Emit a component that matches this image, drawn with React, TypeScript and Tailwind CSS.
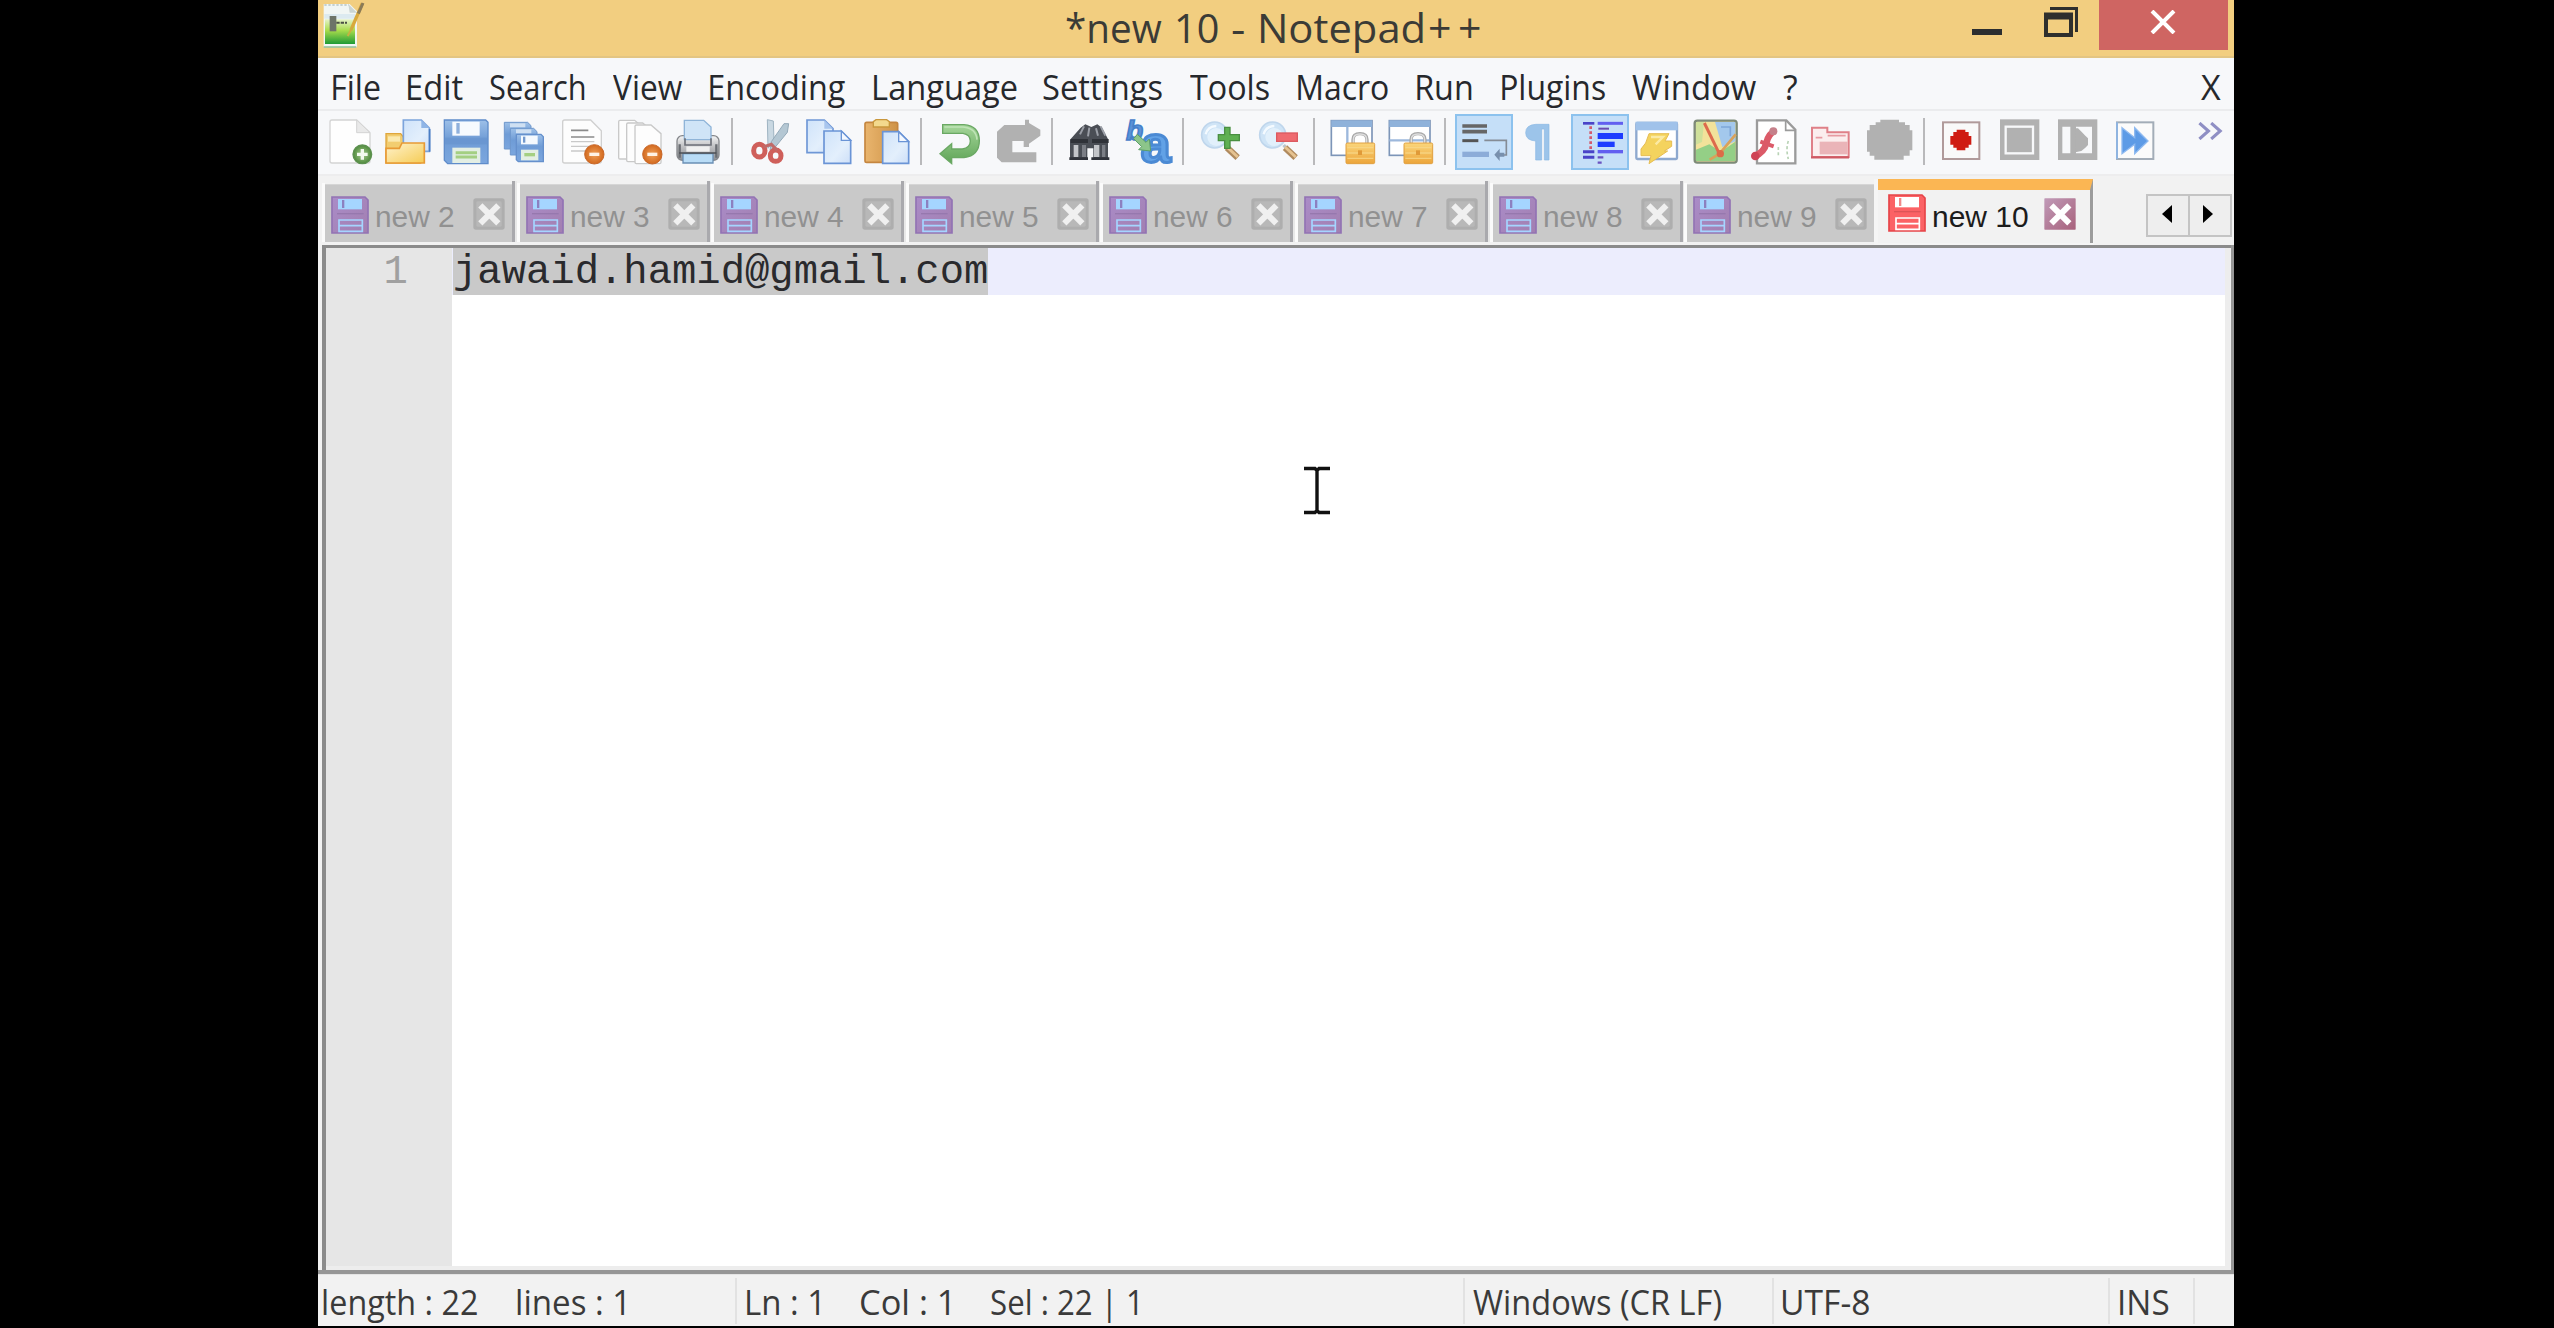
import React, { useLayoutEffect, useRef } from "react";

/** One line of text whose drawn ink fills exactly the width of its box. */
function Ink({ children, className = "" }: { children: string; className?: string }) {
  const box = useRef<HTMLDivElement>(null);
  const text = useRef<HTMLSpanElement>(null);
  useLayoutEffect(() => {
    if (!box.current || !text.current) return;
    const cs = getComputedStyle(text.current);
    const ctx = document.createElement("canvas").getContext("2d");
    if (!ctx) return;
    ctx.font = `${cs.fontWeight} ${cs.fontSize} ${cs.fontFamily}`;
    const m = ctx.measureText(children);
    const s = box.current.clientWidth / (m.actualBoundingBoxRight + m.actualBoundingBoxLeft);
    text.current.style.transform = `translateX(${m.actualBoundingBoxLeft * s}px) scaleX(${s})`;
  }, [children]);
  return (
    <div ref={box} className={"shrink-0 whitespace-pre " + className}>
      <span ref={text} className="inline-block origin-left">
        {children}
      </span>
    </div>
  );
}

const Defs = () => (
  <svg className="absolute size-0" aria-hidden>
    <defs>
      <linearGradient id="blue" x1="0" y1="0" x2="0" y2="1">
        <stop offset="0" stopColor="#9dc0e8" />
        <stop offset=".45" stopColor="#6f9cd6" />
        <stop offset="1" stopColor="#7ba6de" />
      </linearGradient>
      <linearGradient id="sheet" x1="0" y1="0" x2="1" y2="1">
        <stop offset="0" stopColor="#cfe3fa" />
        <stop offset=".6" stopColor="#e3effc" />
        <stop offset="1" stopColor="#cddff8" />
      </linearGradient>
      <linearGradient id="gold" x1="0" y1="0" x2="1" y2="1">
        <stop offset="0" stopColor="#fff3cf" />
        <stop offset="1" stopColor="#f5cc55" />
      </linearGradient>
      <linearGradient id="lock" x1="0" y1="0" x2="0" y2="1">
        <stop offset="0" stopColor="#fbd67c" />
        <stop offset="1" stopColor="#eca53a" />
      </linearGradient>
      <linearGradient id="steel" x1="0" y1="0" x2="0" y2="1">
        <stop offset="0" stopColor="#f4f4f4" />
        <stop offset=".5" stopColor="#b9babd" />
        <stop offset="1" stopColor="#8d8f94" />
      </linearGradient>
      <radialGradient id="orange">
        <stop offset="0" stopColor="#f1a15a" />
        <stop offset="1" stopColor="#d2691e" />
      </radialGradient>
      <radialGradient id="green">
        <stop offset="0" stopColor="#a9cf92" />
        <stop offset="1" stopColor="#4f8a3c" />
      </radialGradient>
      <linearGradient id="purple" x1="0" y1="0" x2="1" y2="1">
        <stop offset="0" stopColor="#aa8cc8" />
        <stop offset="1" stopColor="#a27fb0" />
      </linearGradient>
      <linearGradient id="app" x1="0" y1="0" x2="0" y2="1">
        <stop offset="0" stopColor="#e6f3c8" />
        <stop offset=".45" stopColor="#a8dc4c" />
        <stop offset="1" stopColor="#1f9a35" />
      </linearGradient>
      <linearGradient id="closeActive" x1="0" y1="0" x2="1" y2="1">
        <stop offset="0" stopColor="#c09ab8" />
        <stop offset="1" stopColor="#a8627c" />
      </linearGradient>
      <linearGradient id="paste" x1="0" y1="0" x2="1" y2="0">
        <stop offset="0" stopColor="#e9b56e" />
        <stop offset="1" stopColor="#cf9347" />
      </linearGradient>
      <linearGradient id="turn" x1="0" y1="0" x2="0" y2="1">
        <stop offset="0" stopColor="#a5d69a" />
        <stop offset="1" stopColor="#5fa457" />
      </linearGradient>
    </defs>
  </svg>
);

const Minus = ({ x, y }: { x: number; y: number }) => (
  <g>
    <circle cx={x} cy={y} r="29" fill="url(#orange)" stroke="#c9682a" strokeWidth="3" />
    <rect x={x - 15} y={y - 5} width="30" height="10" fill="#fff3e6" />
  </g>
);

const Lock = () => (
  <g>
    <path d="M69 76V62q0-18 21-18t21 18v14" fill="none" stroke="#a9a9a9" strokeWidth="10" />
    <path d="M70 74V62q0-17 20-17t20 17v12" fill="none" stroke="#dedede" strokeWidth="4" />
    <rect x="48" y="72" width="86" height="62" rx="4" fill="url(#lock)" stroke="#e0a040" strokeWidth="3" />
    <path d="M52 86h78M52 102h78M52 118h78" stroke="#f9dc8e" strokeWidth="4" opacity=".7" />
    <rect x="84" y="94" width="12" height="14" fill="#e09a38" />
  </g>
);

const Magnifier = () => (
  <g>
    <path d="M80 78l10 12" stroke="#b9c3cc" strokeWidth="10" />
    <path d="M84 86l32 30" stroke="#b08a5e" strokeWidth="19" />
    <path d="M84 84l32 30" stroke="#e6c391" strokeWidth="9" />
    <circle cx="47" cy="48" r="39" fill="#cfe4f6" stroke="#bfd6ec" strokeWidth="5" />
    <circle cx="52" cy="54" r="27" fill="#e2f0fb" />
    <path d="M20 46q6-24 32-25" fill="none" stroke="#f4faff" strokeWidth="7" />
  </g>
);

const CloseSheet = ({ x = 0 }: { x?: number }) => (
  <path d={`M${x} 8q0-4 4-4h44l30 26v86q0 4-4 4h-70q-4 0-4-4z`} fill="#fdfdfd" stroke="#c9c9c9" strokeWidth="4" />
);

const MiniDisk = ({ x, y }: { x: number; y: number }) => (
  <g>
    <path d={`M${x} ${y}h70l10 10v70h-80z`} fill="url(#blue)" stroke="#6e97cc" strokeWidth="3" />
    <rect x={x + 17} y={y + 3} width="46" height="12" fill="#cfe0f2" />
  </g>
);

const icons: Record<string, React.ReactNode> = {
  new: (
    <g>
      <path d="M9 9q0-6 6-6h74l40 38v85q0 6-6 6H15q-6 0-6-6z" fill="#fefefe" stroke="#d4d4d4" strokeWidth="4" />
      <path d="M89 3v38h40z" fill="#e9e9e9" stroke="#d4d4d4" strokeWidth="3" />
      <circle cx="106" cy="106" r="28" fill="url(#green)" stroke="#5d9150" strokeWidth="4" />
      <path d="M106 90v32M90 106h32" stroke="#f2faee" strokeWidth="10" />
    </g>
  ),
  open: (
    <g>
      <path d="M3 132V44h44l8 10h52v78z" fill="#f2cd70" stroke="#dfa63c" strokeWidth="4" />
      <path d="M9 52h36v16H9z" fill="#fbe9ae" />
      <path d="M55 3h54l24 24v70H55z" fill="url(#sheet)" stroke="#7ca4dc" strokeWidth="5" />
      <path d="M109 3v24h24z" fill="#8fb5e6" />
      <path d="M134 30v68" stroke="#4a7dc4" strokeWidth="5" />
      <path d="M3 132V88h40l8-16h67v60z" fill="url(#gold)" stroke="#e89a35" strokeWidth="5" />
    </g>
  ),
  save: (
    <g>
      <path d="M4 3h124l7 7v124H14L4 124z" fill="url(#blue)" stroke="#5f8cca" strokeWidth="4" />
      <rect x="28" y="8" width="82" height="42" fill="#f6fafe" />
      <rect x="40" y="12" width="10" height="32" fill="#8fb0dc" />
      <rect x="6" y="56" width="126" height="20" fill="#6490cc" opacity=".5" />
      <rect x="28" y="86" width="84" height="46" fill="#e3eee4" />
      <path d="M38 101h64M38 114h64" stroke="#a4cf82" strokeWidth="9" />
    </g>
  ),
  saveall: (
    <g>
      <MiniDisk x={10} y={10} />
      <MiniDisk x={28} y={28} />
      <path d="M46 46h74l7 7v75H52l-6-6z" fill="url(#blue)" stroke="#6590cc" strokeWidth="4" />
      <rect x="60" y="50" width="50" height="26" fill="#f4f9fe" />
      <rect x="66" y="53" width="7" height="18" fill="#7299cd" />
      <rect x="60" y="92" width="52" height="32" fill="#e3eee4" />
      <path d="M70 107h32" stroke="#a4cf82" strokeWidth="10" />
    </g>
  ),
  close: (
    <g>
      <path d="M11 9q0-6 6-6h78l32 32v91q0 6-6 6H17q-6 0-6-6z" fill="#fdfdfd" stroke="#d0d0d0" strokeWidth="4" />
      <path d="M36 34h52M36 54h70" stroke="#8a8a8a" strokeWidth="5" />
      <path d="M36 68h70M36 82h60M36 96h44" stroke="#c9c9c9" strokeWidth="4" />
      <Minus x={106} y={106} />
    </g>
  ),
  closeall: (
    <g>
      <CloseSheet x={5} />
      <g transform="translate(24 8)">
        <CloseSheet x={5} />
      </g>
      <g transform="translate(50 14)">
        <CloseSheet x={4} />
      </g>
      <Minus x={106} y={106} />
    </g>
  ),
  print: (
    <g>
      <rect x="6" y="50" width="126" height="74" rx="16" fill="url(#steel)" stroke="#85878b" strokeWidth="4" />
      <path d="M28 62V4h58l22 20v38z" fill="#cfe4f7" stroke="#8fb4d8" strokeWidth="4" />
      <path d="M30 58v20h78V58" fill="none" stroke="#6d7078" strokeWidth="5" />
      <rect x="34" y="82" width="70" height="16" fill="#f0f0f0" />
      <path d="M14 76v40M124 76v40" stroke="#6b6e73" strokeWidth="7" />
      <path d="M24 104h90v28H24z" fill="#b9dcf6" stroke="#6a8fb5" strokeWidth="4" />
      <path d="M12 102h112" stroke="#4c4f55" strokeWidth="5" />
    </g>
  ),
  cut: (
    <g>
      <path d="M58 2l18 4 2 60-18 22z" fill="#c9d8e2" stroke="#9fb4c2" strokeWidth="3" />
      <path d="M122 14l-14 0-38 54-4 26 16-10 36-44z" fill="#b4c7d3" stroke="#93a9b8" strokeWidth="3" />
      <ellipse cx="34" cy="95" rx="17" ry="19" fill="none" stroke="#cf5f5a" strokeWidth="15" />
      <ellipse cx="83" cy="110" rx="16" ry="17" fill="none" stroke="#cf5f5a" strokeWidth="15" />
      <path d="M46 84l24-8 18 18" fill="none" stroke="#c06a68" strokeWidth="9" />
    </g>
  ),
  copy: (
    <g>
      <path d="M3 3h52l26 26v72H3z" fill="url(#sheet)" stroke="#6f97d6" strokeWidth="5" />
      <path d="M55 3v26h26z" fill="#a9c6ee" />
      <path d="M54 36h52l28 28v69H54z" fill="url(#sheet)" stroke="#6a94d6" strokeWidth="5" />
      <path d="M106 36v28h28z" fill="#f3f8ff" stroke="#6a94d6" strokeWidth="4" />
    </g>
  ),
  paste: (
    <g>
      <rect x="3" y="10" width="98" height="120" rx="5" fill="url(#paste)" stroke="#c58640" strokeWidth="5" />
      <path d="M28 24V8l8-6h32l8 6v16z" fill="#f3d98d" stroke="#c9973c" strokeWidth="4" />
      <path d="M56 38h48l30 30v65H56z" fill="url(#sheet)" stroke="#6a94d6" strokeWidth="5" />
      <path d="M104 38v30h30z" fill="#f3f8ff" stroke="#6a94d6" strokeWidth="4" />
    </g>
  ),
  undo: (
    <g>
      <path d="M17 17h64q46 4 46 48 0 44-46 51H44v18L9 104l35-30v16h32q24-4 24-24 0-19-22-23H17z" fill="url(#turn)" stroke="#6aa863" strokeWidth="4" />
      <path d="M22 24h56q40 4 42 38" fill="none" stroke="#bfe3b6" strokeWidth="5" />
    </g>
  ),
  redo: (
    <path d="M90 2h12v10l34 20v18l-34 24v10H86V66H52v34h72v30H20L6 116V38l22-20h62z" fill="#b1b1b1" />
  ),
  find: (
    <g>
      <path d="M38 26l14-10 18 8 18-8 14 10 18 34v62H76V88H58v34H6V62z" fill="#4a4e55" />
      <path d="M36 46l12-24M60 52l4-26M84 28l6 22M98 22l14 28" stroke="#9a9ea6" strokeWidth="6" />
      <path d="M8 66h52M72 66h50" stroke="#2f3238" strokeWidth="12" />
      <path d="M17 78h14v36H17zM78 78h16v36H78z" fill="#c3c5c9" />
      <path d="M42 78h12v36H42zM102 78h10v36h-10z" fill="#7b7e85" />
      <path d="M4 119h56M70 119h54" stroke="#30333a" strokeWidth="8" />
    </g>
  ),
  replace: (
    <g fontFamily="Liberation Sans" fontWeight="bold">
      <text x="0" y="64" fontSize="84" fontStyle="italic" fill="#5b93d8" stroke="#4680ca" strokeWidth="5">b</text>
      <text x="44" y="130" fontSize="156" fill="#62a2e6" stroke="#4b8ad4" strokeWidth="9" textLength="90" lengthAdjust="spacingAndGlyphs">a</text>
      <path d="M34 46l26 24 10-10 4 36-36-4 9-9-24-24z" fill="#8cc58a" stroke="#5c9f68" strokeWidth="3" />
    </g>
  ),
  zoomin: (
    <g>
      <Magnifier />
      <path d="M77 25h16v22h28v18H93v23H77V65H58V47h19z" fill="#5fb052" stroke="#4a8f42" strokeWidth="4" />
    </g>
  ),
  zoomout: (
    <g>
      <Magnifier />
      <rect x="59" y="42" width="62" height="25" fill="#ef6b70" stroke="#dc5a60" strokeWidth="4" />
    </g>
  ),
  syncv: (
    <g>
      <rect x="4" y="5" width="122" height="104" fill="#fff" stroke="#7d95b8" strokeWidth="5" />
      <rect x="4" y="4" width="122" height="20" fill="#8fb2da" />
      <path d="M52 24v84" stroke="#9db8dc" strokeWidth="7" />
      <Lock />
    </g>
  ),
  synch: (
    <g>
      <rect x="4" y="5" width="122" height="104" fill="#fff" stroke="#7d95b8" strokeWidth="5" />
      <rect x="4" y="4" width="122" height="20" fill="#8fb2da" />
      <path d="M4 64h120" stroke="#9db8dc" strokeWidth="7" />
      <Lock />
    </g>
  ),
  wrap: (
    <g>
      <path d="M4 21h74M4 38h74" stroke="#666" strokeWidth="11" />
      <path d="M4 65h48" stroke="#555" strokeWidth="9" />
      <path d="M70 64h66v44h-20" fill="none" stroke="#858c95" strokeWidth="5" />
      <path d="M4 106h80" stroke="#8cacd8" strokeWidth="16" />
      <path d="M100 107l16-18v12h14v12h-14v13z" fill="#7890ad" />
    </g>
  ),
  pilcrow: (
    <path d="M90 16v107H76V30h-8v93H50V66Q20 64 20 41t30-25z" fill="#9cc4ea" stroke="#8ab8e4" strokeWidth="2" />
  ),
  indent: (
    <g>
      <path d="M18 13h34" stroke="#4a44c8" strokeWidth="8" />
      <path d="M62 13h76" stroke="#625ff0" strokeWidth="9" />
      <path d="M64 29h32" stroke="#6a4ab0" strokeWidth="6" />
      <path d="M41 22v68" stroke="#d45a6c" strokeWidth="8" strokeDasharray="8 7" />
      <path d="M62 51h76" stroke="#1c3cff" strokeWidth="18" />
      <path d="M62 76h51" stroke="#1c3cff" strokeWidth="16" />
      <path d="M18 98h34M18 115h34" stroke="#4a44c8" strokeWidth="9" />
      <path d="M62 98h76" stroke="#625ff0" strokeWidth="10" />
      <path d="M62 115h17M62 131h12" stroke="#6a52c0" strokeWidth="7" />
    </g>
  ),
  udl: (
    <g>
      <rect x="4" y="12" width="122" height="108" rx="3" fill="#fff" stroke="#8ea9cf" strokeWidth="7" />
      <rect x="2" y="8" width="126" height="26" fill="#a0c2ea" />
      <path d="M42 44h60l-12 22h20v16L88 96h10l-56 38 6-24H18V90l14-18z" fill="#f4d35e" stroke="#e6bd55" strokeWidth="3" />
      <path d="M48 54h36L62 76" fill="none" stroke="#fbeaa4" strokeWidth="7" />
    </g>
  ),
  docmap: (
    <g>
      <rect x="5" y="5" width="126" height="126" rx="8" fill="#f2e29a" stroke="#7d8a78" strokeWidth="7" />
      <path d="M66 9h61v58L88 84z" fill="#a3c8ec" />
      <path d="M9 92l40-16 34 22 44-30v58H9z" fill="#94cf86" />
      <path d="M9 9h24l-6 60-18 8z" fill="#cfe09a" />
      <path d="M34 12l46 94" stroke="#dd6a4c" strokeWidth="9" />
      <path d="M128 46l-48 58-30 18" fill="none" stroke="#d9a25a" strokeWidth="8" />
      <circle cx="82" cy="104" r="11" fill="#dc6b47" />
      <path d="M84 24h28v28" fill="none" stroke="#7ea6d8" strokeWidth="5" />
    </g>
  ),
  func: (
    <g>
      <path d="M18 4h88l27 28v101H18z" fill="#fff" stroke="#9b9b9b" strokeWidth="7" />
      <path d="M104 4v30h29" fill="none" stroke="#9b9b9b" strokeWidth="5" />
      <path d="M10 112q30-12 36-40 6-28 26-36" fill="none" stroke="#db5a68" strokeWidth="20" />
      <path d="M28 68l40 14" stroke="#db5a68" strokeWidth="12" />
      <circle cx="13" cy="111" r="13" fill="#cf4355" />
      <circle cx="67" cy="37" r="12" fill="#c5808a" />
      <path d="M112 66q-8 24 0 54M82 84v30" fill="none" stroke="#b9d3b6" strokeWidth="5" strokeDasharray="9 7" />
    </g>
  ),
  folder: (
    <g>
      <path d="M9 26h46v14h64v74H9z" fill="#fbeeee" stroke="#df8088" strokeWidth="6" />
      <path d="M20 56h20M56 50h54" stroke="#e79ba2" strokeWidth="5" />
      <rect x="32" y="68" width="84" height="38" fill="#eab4b8" />
      <path d="M6 115h114" stroke="#cf5963" strokeWidth="7" />
    </g>
  ),
  monitor: (
    <path d="M40 2h56v8h18v8h14v16h8v60h-8v16h-18v12H22v-12H8V98H0V34h8V18h18v-8h14z" fill="#b1b1b1" />
  ),
  record: (
    <g>
      <rect x="9" y="10" width="109" height="110" fill="#f9f9f9" stroke="#b09a9a" strokeWidth="6" />
      <path d="M50 32h26v7h10v12h8v26h-8v9H76v8H50v-8H40v-9h-9V51h9V39h10z" fill="#cf1b12" />
    </g>
  ),
  stop: (
    <g>
      <rect x="6" y="1" width="118" height="122" fill="#b1b1b1" />
      <rect x="23" y="23" width="82" height="80" fill="none" stroke="#f7f8fa" strokeWidth="7" />
    </g>
  ),
  play: (
    <g>
      <rect x="6" y="1" width="118" height="122" fill="#b1b1b1" />
      <path d="M19 23h24v80H19zM60 23h48v80H60z" fill="#f7f8fa" />
      <path d="M58 28h8l12 12 10 10 8 8v20l-8 8-12 10-18 4z" fill="#b1b1b1" />
    </g>
  ),
  ff: (
    <g>
      <rect x="9" y="10" width="109" height="110" fill="#fbfbfb" stroke="#a3adb8" strokeWidth="6" />
      <path d="M9 120V10" stroke="#8fb4e0" strokeWidth="6" />
      <path d="M24 26l38 30V26l40 40-40 38V76l-38 28z" fill="#5d9be6" stroke="#8fbaf0" strokeWidth="4" />
    </g>
  ),
};

const toolbar =
  "new open save saveall close closeall print | cut copy paste | undo redo | find replace | zoomin zoomout | syncv synch | wrap pilcrow indent udl docmap func folder monitor | record stop play ff".split(" ");

const menu: [string, string, string][] = [
  ["File", "w-[75px]", "w-[47px]"],
  ["Edit", "w-[82px]", "w-[55px]"],
  ["Search", "w-[123px]", "w-[95px]"],
  ["View", "w-[97px]", "w-[69px]"],
  ["Encoding", "w-[164px]", "w-[135px]"],
  ["Language", "w-[169px]", "w-[143px]"],
  ["Settings", "w-[147px]", "w-[119px]"],
  ["Tools", "w-[108px]", "w-[79px]"],
  ["Macro", "w-[119px]", "w-[90px]"],
  ["Run", "w-[85px]", "w-[55px]"],
  ["Plugins", "w-[130px]", "w-[103px]"],
  ["Window", "w-[151px]", "w-[124px]"],
  ["?", "w-[418px]", "w-[14px]"],
  ["X", "w-[20px]", "w-[20px]"],
];

function TabDisk({ active = false }: { active?: boolean }) {
  const light = active ? "#fff" : "#a5d5ff";
  return (
    <svg viewBox="0 0 114 114" className="size-[38px] shrink-0">
      <path d="M3 3h99l9 9v99H3z" fill={active ? "#fb6265" : "url(#purple)"} stroke={active ? "#e64448" : "#9273b4"} strokeWidth="5" />
      <rect x="21" y="9" width="72" height="31" fill={light} />
      <rect x="33" y="12" width="7" height="24" fill={active ? "#f08a8a" : "#8c80c0"} />
      <path d="M18 53h80" stroke={active ? "#dd5558" : "#9678ae"} strokeWidth="4" />
      <path d="M24 72h70v34H24zM24 89h70" fill="none" stroke={light} strokeWidth="5" />
    </svg>
  );
}

function TabClose({ active = false }: { active?: boolean }) {
  return (
    <svg viewBox="0 0 96 96" className="size-8 shrink-0">
      <rect x="1" y="1" width="94" height="94" rx={active ? 2 : 8} fill={active ? "url(#closeActive)" : "#aeaeae"} />
      <rect x="10" y="10" width="76" height="76" rx="4" fill={active ? "none" : "#b8b8b8"} />
      <path d="M22 22l54 54M76 22l-54 54" stroke={active ? "#fff" : "#f0f0f0"} strokeWidth="18" />
    </svg>
  );
}

const Tab = ({ label }: { label: string }) => (
  <div className="flex h-[61px] w-[194.6px] shrink-0">
    <div className="mt-[2px] w-[3px] bg-[#fbfbfb]" />
    <div className="mt-[3px] flex flex-1 border-t border-[#d6d6d6] bg-[#c9c9c9] pl-[6px] pt-[11px]">
      <TabDisk />
      <Ink className="ml-[8px] mt-[4px] w-[77px] font-['Liberation_Sans'] text-[30px] leading-[34px] text-[#919191]">{label}</Ink>
      <div className="ml-[19px] mt-[2px]">
        <TabClose />
      </div>
    </div>
    <div className="w-[3px] bg-[#a9a9ad]" />
    <div className="w-[1.5px] bg-[#e8e8e8]" />
  </div>
);

const StatusText = ({ children, className }: { children: string; className: string }) => (
  <Ink className={"text-[34px] leading-[48px] text-[#3a3a3a] " + className}>{children}</Ink>
);
const StatusRule = () => <div className="h-[46px] w-[2px] shrink-0 bg-[#e2e2e2]" />;

export default function App() {
  return (
    <div className="flex h-[1328px] w-[2554px] overflow-hidden bg-black pl-[318px] font-['Open_Sans',sans-serif]">
      <Defs />
      <div className="flex h-[1326px] w-[1916px] flex-col bg-[#f2f2f2]">
        {/* Title bar */}
        <div className="flex h-[58px] shrink-0 border-b-2 border-[#e3c583] bg-[#f2ce80]">
          <svg viewBox="0 0 126 144" className="ml-[5px] mt-[2px] h-[48px] w-[42px]">
            <path d="M2 6h78l22 22v108H2z" fill="#f1f6f4" />
            <path d="M4 9h74" stroke="#b5c4c4" strokeWidth="5" strokeDasharray="7 5" />
            <path d="M76 6l26 26H80z" fill="#cbd5d3" />
            <path d="M4 36h92v14H4z" fill="#dceaf0" />
            <rect x="6" y="52" width="90" height="74" fill="url(#app)" />
            <rect x="20" y="42" width="20" height="46" fill="#6d7468" />
            <path d="M40 62h32" stroke="#4a4f45" strokeWidth="6" strokeDasharray="10 3" />
            <path d="M2 135h98" stroke="#8fbf9a" strokeWidth="5" />
            <path d="M118 4L84 84" stroke="#d9a93c" strokeWidth="10" />
            <path d="M120 3l-14 32" stroke="#8b7b58" strokeWidth="9" />
            <path d="M88 76l-14 26" stroke="#c8b040" strokeWidth="6" />
          </svg>
          <div className="ml-[701px] flex text-[41px] leading-[54px] text-[#3b3b36]">
            <Ink className="w-[96px]">*new</Ink>
            <Ink className="ml-[15px] w-[41px]">10</Ink>
            <Ink className="ml-[14px] w-[12px]">-</Ink>
            <Ink className="ml-[17px] w-[162px]">Notepad</Ink>
            <Ink className="ml-[7px] w-[20px]">+</Ink>
            <Ink className="ml-[10px] w-[20px]">+</Ink>
          </div>
          <div className="ml-[492px] mt-[29px] h-[6px] w-[30px] bg-[#2c2e30]" />
          <svg viewBox="0 0 34 30" className="ml-[42px] mt-[7px] h-[30px] w-[34px]" fill="none" stroke="#2f2f2d">
            <path d="M6 1.5h26.5V25" strokeWidth="3" />
            <rect x="2" y="8" width="25" height="20" strokeWidth="4" />
            <path d="M0 9h29" strokeWidth="7" />
          </svg>
          <div className="ml-[21px] flex h-[50px] w-[129px] justify-center bg-[#cf6562] pr-[2px] pt-[10px]">
            <svg viewBox="0 0 26 24" className="h-[24px] w-[26px]">
              <path d="M2 1l22 22M24 1L2 23" stroke="#fff" strokeWidth="4" />
            </svg>
          </div>
        </div>

        {/* Menu bar */}
        <div className="flex h-[53px] shrink-0 border-b-2 border-[#ebecee] bg-[#f7f8fa] pl-[15px] pt-[4px] text-[34px] leading-[50px] text-[#26282c]">
          {menu.map(([label, cell, ink]) => (
            <div key={label} className={"shrink-0 " + cell}>
              <Ink className={ink}>{label}</Ink>
            </div>
          ))}
        </div>

        {/* Tool bar */}
        <div className="flex h-[65px] shrink-0 border-b-2 border-[#ededee] bg-[#f7f8fa] pl-[3px] pt-[3px]">
          {toolbar.map((name, i) =>
            name === "|" ? (
              <div key={i} className="w-[15px] shrink-0 pl-[4px] pt-[4px]">
                <div className="h-[47px] w-[2px] bg-[#b9b9bb]" />
              </div>
            ) : (
              <div
                key={i}
                className={
                  "flex h-[56px] w-[58px] shrink-0 items-center justify-center " +
                  (name === "wrap" || name === "indent" ? "border-2 border-[#8cc2ee] bg-[#c5dff8]" : "")
                }
              >
                <svg viewBox="0 0 138 138" className="size-[46px] shrink-0 overflow-visible">
                  {icons[name]}
                </svg>
              </div>
            ),
          )}
          <svg viewBox="0 0 72 52" className="ml-[32px] mt-[8px] h-[18px] w-[25px]" fill="none" stroke="#8f8fc4" strokeWidth="9">
            <path d="M4 3l26 23L4 49M38 3l26 23-26 23" />
          </svg>
        </div>

        {/* Tab strip */}
        <div className="flex h-[69px] shrink-0 pl-[4px] pt-[3px]">
          <div className="flex pt-[2px]">
            {["new 2", "new 3", "new 4", "new 5", "new 6", "new 7", "new 8", "new 9"].map((t) => (
              <Tab key={t} label={t} />
            ))}
          </div>
          <div className="-ml-[5px] flex h-[66px] w-[220px] shrink-0 bg-[#f5f5f5] pl-[4px]">
            <div className="flex h-[64px] w-[215px] shrink-0 border-r-[3px] border-t-[11px] border-r-[#9c9c9c] border-t-[#fbb653] bg-[#f2f2f2] pl-[10px] pt-[4px]">
              <TabDisk active />
              <Ink className="ml-[8px] mt-[6px] w-[94px] font-['Liberation_Sans'] text-[30px] leading-[34px] text-[#1c1c1c]">new 10</Ink>
              <div className="ml-[16px] mt-[4px]">
                <TabClose active />
              </div>
            </div>
          </div>
          <div className="ml-[52px] mt-[15px] flex h-[43px]">
            <div className="flex w-[44px] items-center justify-center border-2 border-[#c4c4c4] bg-[#eee]">
              <svg viewBox="0 0 10 18" className="mb-[3px] mr-[1px] h-[18px] w-[10px]"><path d="M10 0v18L0 9z" /></svg>
            </div>
            <div className="-ml-[2px] flex w-[44px] items-center justify-center border-2 border-[#c4c4c4] bg-[#eee]">
              <svg viewBox="0 0 10 18" className="mb-[3px] mr-[4px] h-[18px] w-[10px]"><path d="M0 0v18l10-9z" /></svg>
            </div>
          </div>
        </div>

        {/* Editor */}
        <div className="flex min-h-0 flex-1 border-b-[4px] border-r-[3px] border-[#969696] pl-[4px]">
          <div className="flex flex-1 border-l-[4px] border-t-[3px] border-[#8b8b8b] bg-[#ededed] pb-[4px] pr-[6px] font-['Liberation_Mono',monospace] text-[40.55px] leading-[47px]">
            <div className="w-[126px] shrink-0 bg-[#e6e6e6] pl-[57.5px] pt-px text-[#a0a0a0]">1</div>
            <div className="flex-1 bg-white">
              <div className="flex h-[47px] bg-[#ecedfd] pl-[1px]">
                <div className="h-[47px] w-[535px] bg-[#c9c9c9] pt-px text-[#2a2a2d]">jawaid.hamid@gmail.com</div>
              </div>
              <svg viewBox="0 0 80 80" className="ml-[828px] mt-[155px] size-[80px]" fill="none" stroke="#111" strokeWidth="3.4">
                <path d="M24 18.500h11l2 2 2-2h11M37 20v41M24 62.500h11l2-2 2 2h11" />
              </svg>
            </div>
          </div>
        </div>

        {/* Status bar */}
        <div className="flex h-[52px] shrink-0 border-t border-[#e4e4e4] pl-[5px] pt-[3px]">
          <StatusText className="w-[154px]">length : 22</StatusText>
          <StatusText className="ml-[40px] w-[107px]">lines : 1</StatusText>
          <div className="ml-[111px] mr-[10px]"><StatusRule /></div>
          <StatusText className="w-[72px]">Ln : 1</StatusText>
          <StatusText className="ml-[42px] w-[88px]">Col : 1</StatusText>
          <StatusText className="ml-[42px] w-[146px]">Sel : 22 | 1</StatusText>
          <div className="ml-[326px] mr-[8px]"><StatusRule /></div>
          <StatusText className="w-[248px]">Windows (CR LF)</StatusText>
          <div className="ml-[51px] mr-[9px]"><StatusRule /></div>
          <StatusText className="w-[86px]">UTF-8</StatusText>
          <div className="ml-[239px] mr-[10px]"><StatusRule /></div>
          <StatusText className="w-[49px]">INS</StatusText>
          <div className="ml-[24px]"><StatusRule /></div>
        </div>
      </div>
    </div>
  );
}
